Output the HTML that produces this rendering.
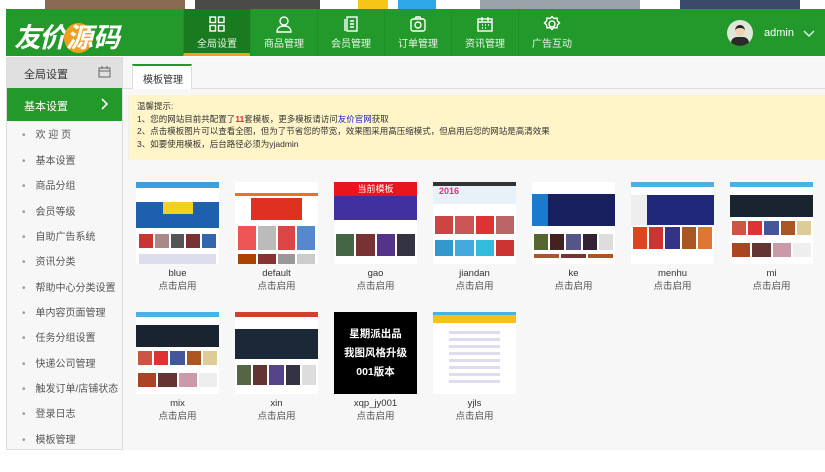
<!DOCTYPE html>
<html><head><meta charset="utf-8"><style>
*{margin:0;padding:0;box-sizing:border-box}
body{width:825px;height:472px;background:#fff;font-family:"Liberation Sans","Noto Sans CJK SC",sans-serif;position:relative;overflow:hidden;font-size:10px;color:#333}
.a{position:absolute}
.hdr{left:6px;top:9px;width:819px;height:47px;background:#22992a}
.nav{top:9px;width:67px;height:47px;color:#e8f5e8;text-align:center;font-size:10px;border-left:1px solid #1f8f26}
.nav svg{display:block;margin:6px auto 2px}
.side{left:6px;top:57px;width:117px;height:393px;border:1px solid #ddd;background:#f7f7f7}
.it{left:22px;color:#555;font-size:10px}
.it:before{content:"•";color:#999;margin-right:10px}
.main{left:123px;top:57px;width:702px;height:393px;background:#f7f7f7}
.th{width:83px;height:82px;background:#fff;overflow:hidden}
.lb{width:99px;text-align:center;font-size:9.5px;line-height:13px;color:#333}
.lb span{color:#555}
</style></head><body>
<!-- top strip -->
<div class="a" style="left:45px;top:0;width:140px;height:9px;background:#8a6a50"></div>
<div class="a" style="left:195px;top:0;width:125px;height:9px;background:#4a4a48"></div>
<div class="a" style="left:358px;top:0;width:30px;height:9px;background:#f5c518"></div>
<div class="a" style="left:398px;top:0;width:38px;height:9px;background:#2ea8e8"></div>
<div class="a" style="left:480px;top:0;width:160px;height:9px;background:#9aa2aa"></div>
<div class="a" style="left:680px;top:0;width:120px;height:9px;background:#3a4a6a"></div>
<div class="a hdr"></div>
<div class="a" style="left:14px;top:16px;font-size:27px;font-weight:bold;color:#fff;font-style:italic;letter-spacing:-2px">友价<span style="background:#f0a020;border-radius:50%;padding:0 2px;color:#fff">源</span>码</div>
<div class="a nav" style="left:183px;background:#197a20;border-bottom:3px solid #f0a020"><svg width="18" height="18" viewBox="0 0 18 18" fill="none" stroke="#fff" stroke-width="1.4"><rect x="2" y="2" width="5.5" height="5.5"/><rect x="10.5" y="2" width="5.5" height="5.5"/><rect x="2" y="10.5" width="5.5" height="5.5"/><rect x="10.5" y="10.5" width="5.5" height="5.5"/></svg>全局设置</div>
<div class="a nav" style="left:250px"><svg width="18" height="18" viewBox="0 0 18 18" fill="none" stroke="#fff" stroke-width="1.4"><circle cx="9" cy="6" r="4"/><path d="M2 17c0-4 3-6 7-6s7 2 7 6z"/></svg>商品管理</div>
<div class="a nav" style="left:317px"><svg width="18" height="18" viewBox="0 0 18 18" fill="none" stroke="#fff" stroke-width="1.4"><rect x="5" y="2" width="10" height="14"/><path d="M3 4v12M8 6h4M8 9h4M8 12h4"/></svg>会员管理</div>
<div class="a nav" style="left:384px"><svg width="18" height="18" viewBox="0 0 18 18" fill="none" stroke="#fff" stroke-width="1.4"><rect x="2" y="4" width="14" height="12" rx="2"/><circle cx="9" cy="10" r="3"/><path d="M6 4l1-2h4l1 2"/></svg>订单管理</div>
<div class="a nav" style="left:451px"><svg width="18" height="18" viewBox="0 0 18 18" fill="none" stroke="#fff" stroke-width="1.4"><rect x="2" y="4" width="14" height="12"/><path d="M2 7h14M6 2v4M12 2v4M6 10h1M9 10h1M12 10h1M6 13h1M9 13h1"/></svg>资讯管理</div>
<div class="a nav" style="left:518px"><svg width="18" height="18" viewBox="0 0 18 18" fill="none" stroke="#fff" stroke-width="1.4"><circle cx="9" cy="9" r="3"/><path d="M9 1.5l2 2 3-.5.5 3 2 2-2 2-.5 3-3-.5-2 2-2-2-3 .5-.5-3-2-2 2-2 .5-3 3 .5z"/></svg>广告互动</div>
<div class="a" style="left:727px;top:20px;width:26px;height:26px;border-radius:50%;background:#dfe8d8;overflow:hidden"><div class="a" style="left:8px;top:5px;width:10px;height:11px;border-radius:50%;background:#f2d2b6;border-top:3px solid #222"></div><div class="a" style="left:4px;top:17px;width:18px;height:12px;border-radius:6px 6px 0 0;background:#2a2a2a"></div></div>
<div class="a" style="left:764px;top:27px;color:#fff;font-size:11px">admin</div>
<svg class="a" style="left:803px;top:30px" width="12" height="8" viewBox="0 0 12 8"><path d="M1 1l5 5 5-5" fill="none" stroke="#dfe" stroke-width="1.4"/></svg>
<!-- sidebar -->
<div class="a side"></div>
<div class="a" style="left:7px;top:58px;width:115px;height:30px;background:#e0e0e0"></div>
<div class="a" style="left:24px;top:66px;font-size:11px;color:#333">全局设置</div>
<svg class="a" style="left:98px;top:66px" width="13" height="12" viewBox="0 0 13 12" fill="none" stroke="#666"><rect x="1" y="2" width="11" height="9"/><path d="M1 5h11M4 0v3M9 0v3"/></svg>
<div class="a" style="left:7px;top:88px;width:115px;height:33px;background:#22992a"></div>
<div class="a" style="left:24px;top:98px;font-size:11px;color:#fff">基本设置</div>
<svg class="a" style="left:101px;top:98px" width="8" height="12" viewBox="0 0 8 12"><path d="M1 1l5 5-5 5" fill="none" stroke="#fff" stroke-width="1.6"/></svg>
<div class="a it" style="top:126px">欢 迎 页</div>
<div class="a it" style="top:152px">基本设置</div>
<div class="a it" style="top:177px">商品分组</div>
<div class="a it" style="top:203px">会员等级</div>
<div class="a it" style="top:228px">自助广告系统</div>
<div class="a it" style="top:253px">资讯分类</div>
<div class="a it" style="top:279px">帮助中心分类设置</div>
<div class="a it" style="top:304px">单内容页面管理</div>
<div class="a it" style="top:329px">任务分组设置</div>
<div class="a it" style="top:355px">快递公司管理</div>
<div class="a it" style="top:380px">触发订单/店铺状态</div>
<div class="a it" style="top:405px">登录日志</div>
<div class="a it" style="top:431px">模板管理</div>
<!-- main -->
<div class="a main"></div>
<div class="a" style="left:123px;top:88px;width:702px;height:1px;background:#ddd"></div>
<div class="a" style="left:132px;top:64px;width:60px;height:25px;background:#fff;border:1px solid #ddd;border-top:2px solid #22992a;border-bottom:none;font-size:10px;padding:5px 0 0 10px">模板管理</div>
<div class="a" style="left:128px;top:95px;width:697px;height:65px;background:#fff5c8;border-left:1px solid #eee;font-size:8.5px;line-height:12.5px;padding:5px 0 0 8px;color:#333">温馨提示:<br>1、您的网站目前共配置了<b style="color:#e22">11</b>套模板，更多模板请访问<span style="color:#22c">友价官网</span>获取<br>2、点击模板图片可以查看全图，但为了节省您的带宽，效果图采用高压缩模式，但启用后您的网站是高清效果<br>3、如要使用模板，后台路径必须为yjadmin</div>

<!-- thumbs row1 -->
<div class="a th" style="left:136px;top:182px"><div style="height:6px;background:#3aa0e0"></div><div style="height:8px;background:#fff"></div><div style="height:26px;background:#1e5fb0"><div style="margin:6px auto;width:30px;height:12px;background:#f5d020"></div></div><div style="height:6px"></div><div style="display:flex;gap:2px;padding:0 3px;height:14px"><i style="flex:1;background:#c33"></i><i style="flex:1;background:#a88"></i><i style="flex:1;background:#555"></i><i style="flex:1;background:#733"></i><i style="flex:1;background:#36a"></i></div><div style="height:10px;margin:6px 3px;background:#dde"></div></div>
<div class="a th" style="left:235px;top:182px"><div style="height:14px;background:#fff;border-bottom:3px solid #f07020"></div><div style="height:22px;margin:2px 16px;background:#e03020"></div><div style="display:flex;gap:2px;padding:4px 3px;height:32px"><i style="flex:1;background:#e55"></i><i style="flex:1;background:#bbb"></i><i style="flex:1;background:#d44"></i><i style="flex:1;background:#58c"></i></div><div style="display:flex;gap:2px;padding:0 3px;height:10px"><i style="flex:1;background:#a40"></i><i style="flex:1;background:#833"></i><i style="flex:1;background:#999"></i><i style="flex:1;background:#ccc"></i></div></div>
<div class="a th" style="left:334px;top:182px"><div style="height:14px;background:#e8151c;color:#fff;font-size:9px;text-align:center;line-height:14px">当前模板</div><div style="height:24px;background:#4030a0"></div><div style="height:14px"></div><div style="display:flex;gap:2px;padding:0 2px;height:22px"><i style="flex:1;background:#464"></i><i style="flex:1;background:#733"></i><i style="flex:1;background:#538"></i><i style="flex:1;background:#334"></i></div></div>
<div class="a th" style="left:433px;top:182px"><div style="height:4px;background:#333"></div><div style="height:18px;background:#e8f0f8;color:#e03080;font-size:9px;font-weight:bold;padding-left:6px">2016</div><div style="height:12px"></div><div style="display:flex;gap:2px;padding:0 2px;height:18px"><i style="flex:1;background:#c44"></i><i style="flex:1;background:#c55"></i><i style="flex:1;background:#d33"></i><i style="flex:1;background:#b66"></i></div><div style="display:flex;gap:2px;padding:6px 2px;height:28px"><i style="flex:1;background:#39c"></i><i style="flex:1;background:#4ad"></i><i style="flex:1;background:#3bd"></i><i style="flex:1;background:#c33"></i></div></div>
<div class="a th" style="left:532px;top:182px"><div style="height:12px;background:#fff"></div><div style="display:flex;height:32px"><i style="width:16px;background:#1a7ad0"></i><i style="flex:1;background:#182060"></i></div><div style="height:8px"></div><div style="display:flex;gap:2px;padding:0 2px;height:16px"><i style="flex:1;background:#563"></i><i style="flex:1;background:#422"></i><i style="flex:1;background:#558"></i><i style="flex:1;background:#323"></i><i style="flex:1;background:#ddd"></i></div><div style="display:flex;gap:2px;padding:4px 2px;height:12px"><i style="flex:1;background:#a53"></i><i style="flex:1;background:#733"></i><i style="flex:1;background:#a52"></i></div></div>
<div class="a th" style="left:631px;top:182px"><div style="height:5px;background:#4ab0e8"></div><div style="height:8px"></div><div style="display:flex;height:30px"><i style="width:16px;background:#eee"></i><i style="flex:1;background:#20287a"></i></div><div style="display:flex;gap:2px;padding:2px;height:26px"><i style="flex:1;background:#d42"></i><i style="flex:1;background:#c33"></i><i style="flex:1;background:#338"></i><i style="flex:1;background:#a52"></i><i style="flex:1;background:#d73"></i></div></div>
<div class="a th" style="left:730px;top:182px"><div style="height:5px;background:#4ab0e8"></div><div style="height:8px"></div><div style="height:22px;background:#1a2430"></div><div style="height:4px"></div><div style="display:flex;gap:2px;padding:0 2px;height:14px"><i style="flex:1;background:#c54"></i><i style="flex:1;background:#d33"></i><i style="flex:1;background:#459"></i><i style="flex:1;background:#a52"></i><i style="flex:1;background:#dc9"></i></div><div style="display:flex;gap:2px;padding:8px 2px;height:30px"><i style="flex:1;background:#a42"></i><i style="flex:1;background:#633"></i><i style="flex:1;background:#c9a"></i><i style="flex:1;background:#eee"></i></div></div>
<div class="a lb" style="left:128px;top:267px">blue<br><span>点击启用</span></div>
<div class="a lb" style="left:227px;top:267px">default<br><span>点击启用</span></div>
<div class="a lb" style="left:326px;top:267px">gao<br><span>点击启用</span></div>
<div class="a lb" style="left:425px;top:267px">jiandan<br><span>点击启用</span></div>
<div class="a lb" style="left:524px;top:267px">ke<br><span>点击启用</span></div>
<div class="a lb" style="left:623px;top:267px">menhu<br><span>点击启用</span></div>
<div class="a lb" style="left:722px;top:267px">mi<br><span>点击启用</span></div>
<!-- row2 -->
<div class="a th" style="left:136px;top:312px"><div style="height:5px;background:#4ab0e8"></div><div style="height:8px"></div><div style="height:22px;background:#1a2430"></div><div style="height:4px"></div><div style="display:flex;gap:2px;padding:0 2px;height:14px"><i style="flex:1;background:#c54"></i><i style="flex:1;background:#d33"></i><i style="flex:1;background:#459"></i><i style="flex:1;background:#a52"></i><i style="flex:1;background:#dc9"></i></div><div style="display:flex;gap:2px;padding:8px 2px;height:30px"><i style="flex:1;background:#a42"></i><i style="flex:1;background:#633"></i><i style="flex:1;background:#c9a"></i><i style="flex:1;background:#eee"></i></div></div>
<div class="a th" style="left:235px;top:312px"><div style="height:5px;background:#d04030"></div><div style="height:12px"></div><div style="height:30px;background:#1a2838"></div><div style="height:6px"></div><div style="display:flex;gap:2px;padding:0 2px;height:20px"><i style="flex:1;background:#564"></i><i style="flex:1;background:#633"></i><i style="flex:1;background:#548"></i><i style="flex:1;background:#334"></i><i style="flex:1;background:#ddd"></i></div></div>
<div class="a th" style="left:334px;top:312px;background:#000;color:#fff;font-size:10.5px;font-weight:bold;text-align:center;line-height:19px;padding-top:13px">星期派出品<br>我图风格升级<br>001版本</div>
<div class="a th" style="left:433px;top:312px"><div style="height:3px;background:#4ab0e8"></div><div style="height:8px;background:#f5c020"></div><div style="margin:4px 16px;height:60px;background:repeating-linear-gradient(#fff 0 4px,#dde 4px 7px)"></div></div>
<div class="a lb" style="left:128px;top:397px">mix<br><span>点击启用</span></div>
<div class="a lb" style="left:227px;top:397px">xin<br><span>点击启用</span></div>
<div class="a lb" style="left:326px;top:397px">xqp_jy001<br><span>点击启用</span></div>
<div class="a lb" style="left:425px;top:397px">yjls<br><span>点击启用</span></div>
</body></html>
